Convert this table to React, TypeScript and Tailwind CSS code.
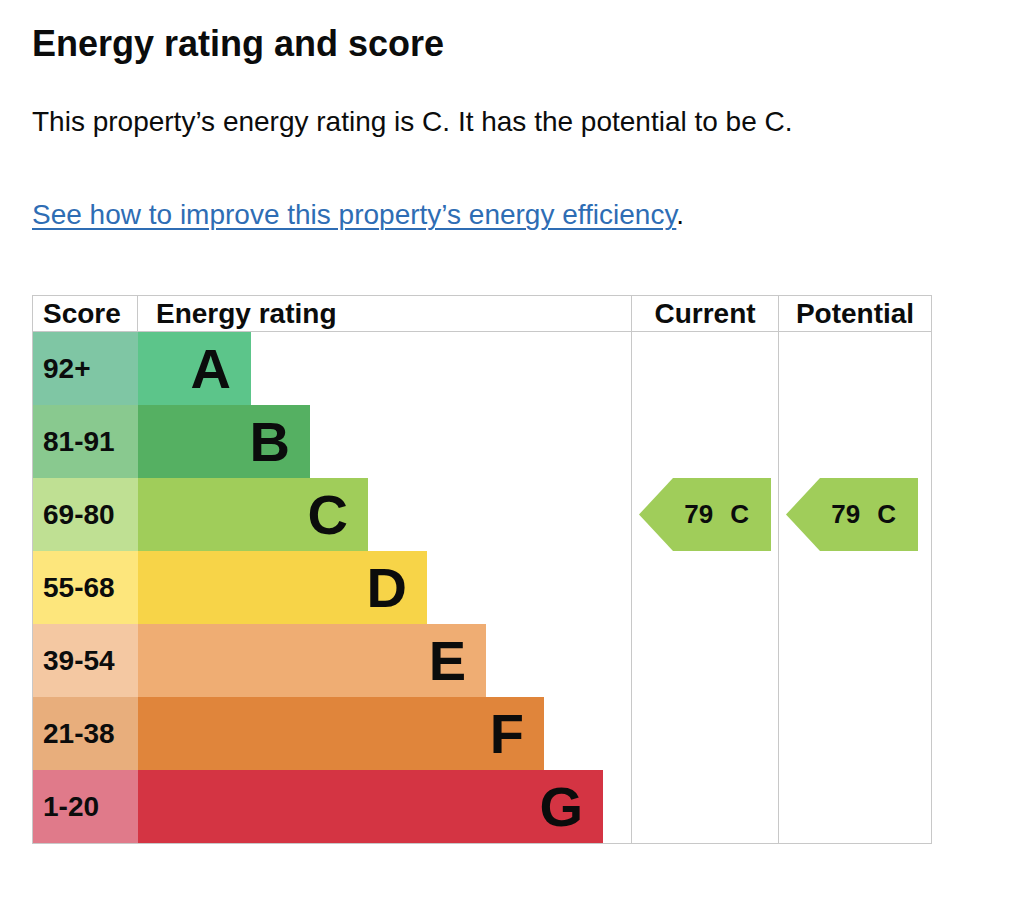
import React from "react";

type Band = {
  letter: string;
  range: string;
  scoreBg: string;
  barBg: string;
  width: string;
};

const bands: Band[] = [
  { letter: "A", range: "92+", scoreBg: "bg-[#7fc6a4]", barBg: "bg-[#5cc58a]", width: "w-[113px]" },
  { letter: "B", range: "81-91", scoreBg: "bg-[#89c98f]", barBg: "bg-[#55b062]", width: "w-[172px]" },
  { letter: "C", range: "69-80", scoreBg: "bg-[#bfe093]", barBg: "bg-[#a0cd5a]", width: "w-[230px]" },
  { letter: "D", range: "55-68", scoreBg: "bg-[#fde67c]", barBg: "bg-[#f7d448]", width: "w-[289px]" },
  { letter: "E", range: "39-54", scoreBg: "bg-[#f4c8a2]", barBg: "bg-[#efad73]", width: "w-[348px]" },
  { letter: "F", range: "21-38", scoreBg: "bg-[#e8ae7c]", barBg: "bg-[#e0853b]", width: "w-[406px]" },
  { letter: "G", range: "1-20", scoreBg: "bg-[#e07a8a]", barBg: "bg-[#d43443]", width: "w-[465px]" },
];

function RatingArrow({ score, letter }: { score: number; letter: string }) {
  return (
    <div className="ml-[7px] flex h-[73px] w-[132px] items-center justify-end gap-[17px] bg-[#a0cd5a] pr-[22px] text-[26px] font-bold text-[#0b0c0c] [clip-path:polygon(0_50%,34px_0,100%_0,100%_100%,34px_100%)]">
      <span>{score}</span>
      <span>{letter}</span>
    </div>
  );
}

function ArrowColumn({ score, letter }: { score: number; letter: string }) {
  return (
    <div className="flex flex-col">
      {bands.map((b) => (
        <div key={b.letter} className="flex h-[73px] items-center">
          {b.letter === letter && <RatingArrow score={score} letter={letter} />}
        </div>
      ))}
    </div>
  );
}

export default function App() {
  return (
    <div className="min-h-screen bg-white px-8 pt-6 font-['Liberation_Sans',Arial,sans-serif] text-[#0b0c0c]">
      <h2 className="text-[36px] font-bold leading-[40px]">Energy rating and score</h2>

      <p className="mt-[42px] text-[28px] leading-[32px]">
        This property’s energy rating is C. It has the potential to be C.
      </p>

      <p className="mt-[61px] text-[28px] leading-[32px]">
        <a href="#" className="text-[#2e6db4] underline decoration-[1.5px] underline-offset-[4px]">
          See how to improve this property’s energy efficiency
        </a>
        .
      </p>

      <div className="mt-[64px] w-[900px] border border-[#c8c8c8]">
        <div className="flex h-[36px] border-b border-[#c8c8c8] text-[28px] font-bold leading-[35px]">
          <div className="w-[105px] border-r border-[#c8c8c8] pl-[10px]">Score</div>
          <div className="w-[494px] border-r border-[#c8c8c8] pl-[18px]">Energy rating</div>
          <div className="w-[147px] border-r border-[#c8c8c8] text-center">Current</div>
          <div className="flex-1 text-center">Potential</div>
        </div>

        <div className="flex">
          <div className="flex w-[599px] flex-col border-r border-[#c8c8c8]">
            {bands.map((b) => (
              <div key={b.letter} className="flex h-[73px]">
                <div className={`flex w-[105px] items-center pl-[10px] text-[28px] font-bold ${b.scoreBg}`}>
                  {b.range}
                </div>
                <div
                  className={`flex items-center justify-end pr-[20px] text-[56px] font-bold leading-none ${b.barBg} ${b.width}`}
                >
                  {b.letter}
                </div>
              </div>
            ))}
          </div>
          <div className="w-[147px] border-r border-[#c8c8c8]">
            <ArrowColumn score={79} letter="C" />
          </div>
          <div className="flex-1">
            <ArrowColumn score={79} letter="C" />
          </div>
        </div>
      </div>
    </div>
  );
}
